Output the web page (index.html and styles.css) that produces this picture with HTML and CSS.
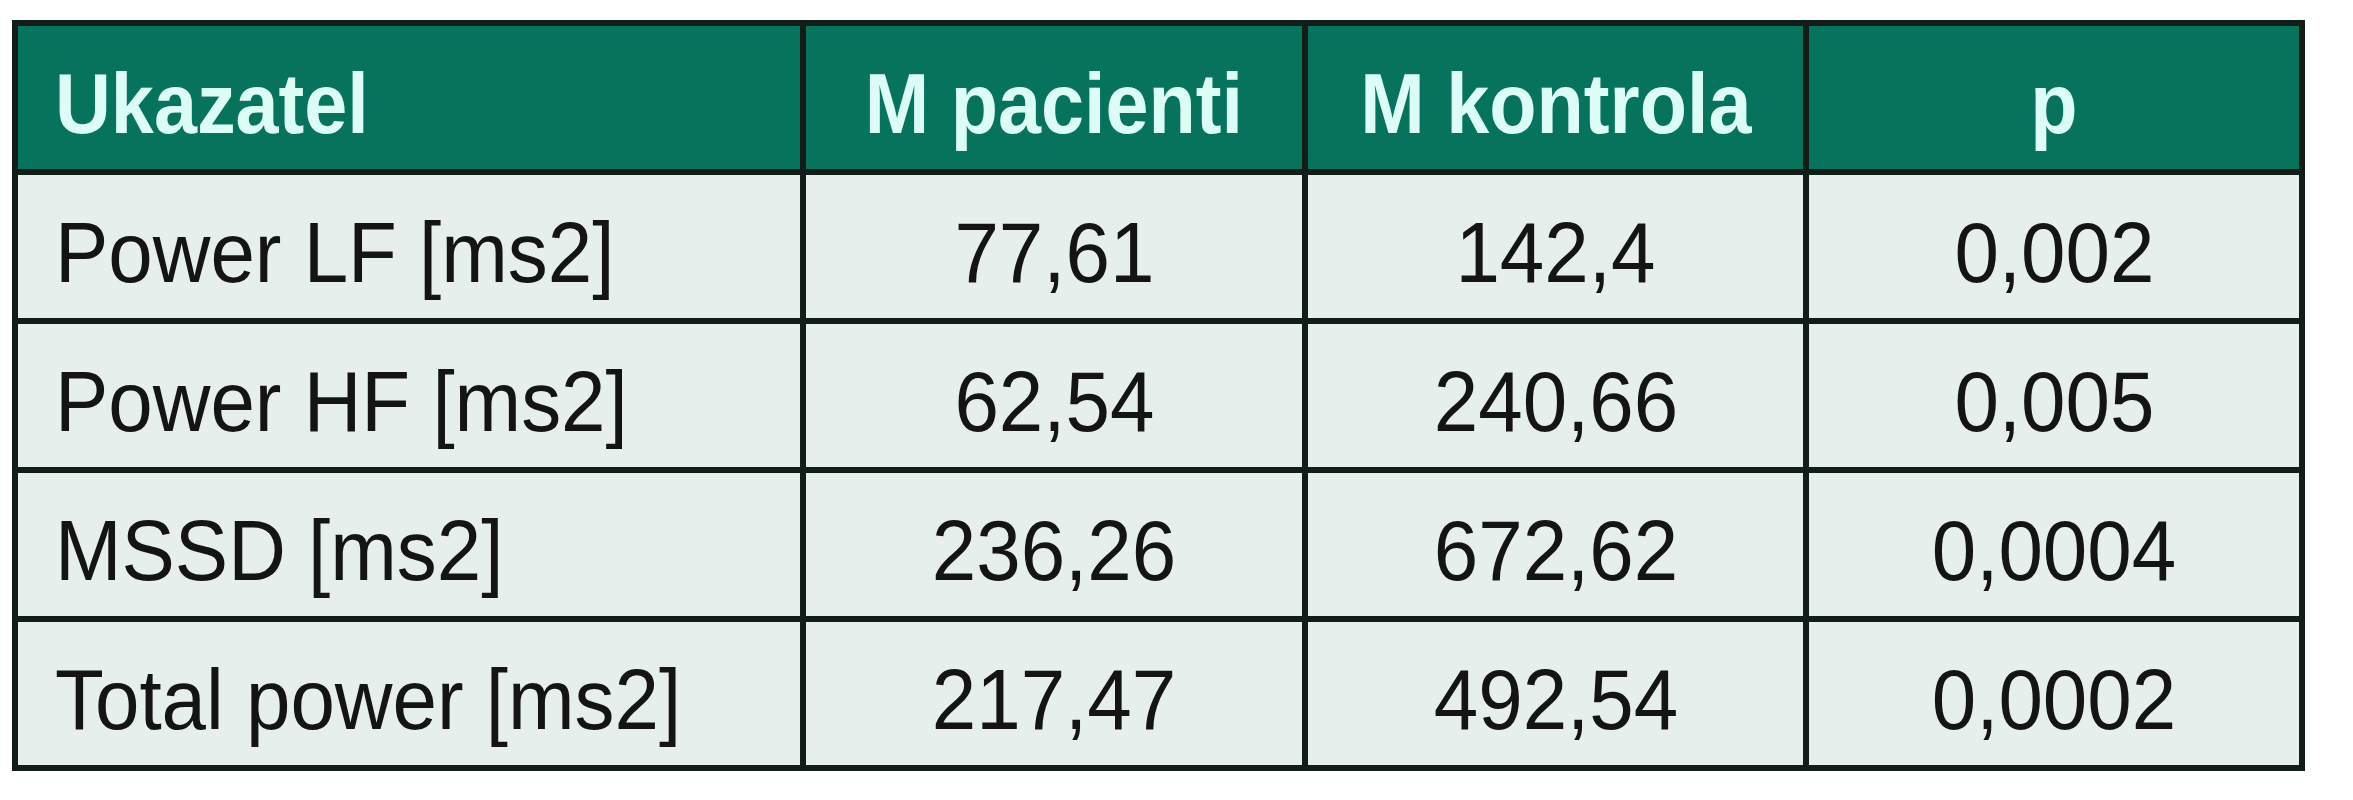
FILE: index.html
```html
<!DOCTYPE html>
<html lang="cs">
<head>
<meta charset="utf-8">
<title>Ukazatel</title>
<link rel="stylesheet" href="styles.css">
</head>
<body>
<div class="table">
  <div class="cell head left"><span class="txt">Ukazatel</span></div>
  <div class="cell head"><span class="txt">M pacienti</span></div>
  <div class="cell head"><span class="txt">M kontrola</span></div>
  <div class="cell head"><span class="txt">p</span></div>

  <div class="cell left"><span class="txt">Power LF [ms2]</span></div>
  <div class="cell"><span class="txt">77,61</span></div>
  <div class="cell"><span class="txt">142,4</span></div>
  <div class="cell"><span class="txt">0,002</span></div>

  <div class="cell left"><span class="txt">Power HF [ms2]</span></div>
  <div class="cell"><span class="txt">62,54</span></div>
  <div class="cell"><span class="txt">240,66</span></div>
  <div class="cell"><span class="txt">0,005</span></div>

  <div class="cell left"><span class="txt">MSSD [ms2]</span></div>
  <div class="cell"><span class="txt">236,26</span></div>
  <div class="cell"><span class="txt">672,62</span></div>
  <div class="cell"><span class="txt">0,0004</span></div>

  <div class="cell left"><span class="txt">Total power [ms2]</span></div>
  <div class="cell"><span class="txt">217,47</span></div>
  <div class="cell"><span class="txt">492,54</span></div>
  <div class="cell"><span class="txt">0,0002</span></div>
</div>
</body>
</html>
```

FILE: styles.css
```css
html, body {
  margin: 0;
  padding: 0;
  background: #ffffff;
}
body {
  padding: 20px 0 0 12px;
  font-family: "Liberation Sans", Arial, sans-serif;
}
.table {
  display: grid;
  grid-template-columns: 782px 496px 495px 490px;
  grid-auto-rows: 143px;
  gap: 6px;
  padding: 6px;
  width: max-content;
  background: #101d19;
}
.cell {
  display: flex;
  align-items: center;
  justify-content: center;
  padding-top: 12px;
  box-sizing: border-box;
  background: #e7efec;
  color: #141414;
  font-size: 85px;
  line-height: 1;
  white-space: nowrap;
}
.txt {
  display: inline-block;
  transform: scaleX(0.94);
  transform-origin: center center;
}
.cell.left {
  justify-content: flex-start;
  padding-left: 37px;
}
.cell.left .txt {
  transform-origin: left center;
}
.cell.head {
  background: #07735d;
  color: #dcfcf6;
  font-weight: 700;
}
.cell.head .txt {
  transform: scaleX(0.91);
}
```
